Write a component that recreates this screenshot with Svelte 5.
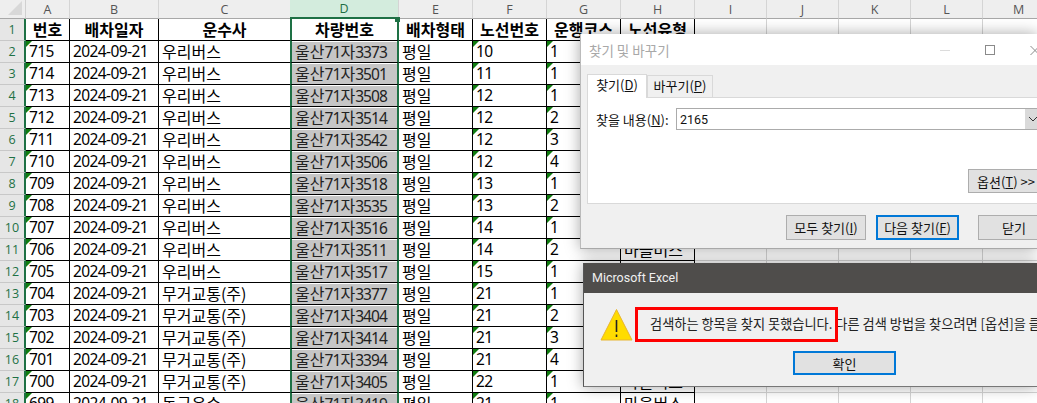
<script>
    const letters = ['A', 'B', 'C', 'D', 'E', 'F', 'G', 'H', 'I', 'J', 'K', 'L', 'M'];
    const widths = [44, 89, 132, 108, 74, 74, 74, 74, 72, 72, 72, 72, 72];
    const heads = ['번호', '배차일자', '운수사', '차량번호', '배차형태', '노선번호', '운행코스', '노선유형'];

    // no, company, plate, route, course
    const rows = [
        [715, '우리버스', 3373, 10, 1],
        [714, '우리버스', 3501, 11, 1],
        [713, '우리버스', 3508, 12, 1],
        [712, '우리버스', 3514, 12, 2],
        [711, '우리버스', 3542, 12, 3],
        [710, '우리버스', 3506, 12, 4],
        [709, '우리버스', 3518, 13, 1],
        [708, '우리버스', 3535, 13, 2],
        [707, '우리버스', 3516, 14, 1],
        [706, '우리버스', 3511, 14, 2],
        [705, '우리버스', 3517, 15, 1],
        [704, '무거교통(주)', 3377, 21, 1],
        [703, '무거교통(주)', 3404, 21, 2],
        [702, '무거교통(주)', 3414, 21, 3],
        [701, '무거교통(주)', 3394, 21, 4],
        [700, '무거교통(주)', 3405, 22, 1],
        [699, '동구운수', 3419, 21, 1]
    ];

    const gridCols = '26px ' + widths.map((w) => w + 'px').join(' ');
</script>

<div class="sheet" style="grid-template-columns: {gridCols}">
    <div class="corner"><span class="tri"></span></div>
    {#each letters as l}
        <div class="colhead" class:sel={l === 'D'}>{l}</div>
    {/each}

    <div class="rowhead">1</div>
    {#each heads as h, i}
        <div class="cell head" class:plate={i === 3}>{h}</div>
    {/each}
    {#each Array(5) as _}
        <div class="cell blank"></div>
    {/each}

    {#each rows as r, i}
        <div class="rowhead">{i + 2}</div>
        <div class="cell tick num">{r[0]}</div>
        <div class="cell num">2024-09-21</div>
        <div class="cell">{r[1]}</div>
        <div class="cell plate found">
            <span class="fill">울산<span class="num">71</span>자<span class="num">{r[2]}</span></span>
        </div>
        <div class="cell">평일</div>
        <div class="cell tick num">{r[3]}</div>
        <div class="cell tick num">{r[4]}</div>
        <div class="cell">마을버스</div>
        {#each Array(5) as _}
            <div class="cell blank"></div>
        {/each}
    {/each}
</div>

<div class="findbox">
    <div class="titlebar">
        <span>찾기 및 바꾸기</span>
        <svg class="winbtns" width="97" height="14" viewBox="0 0 97 14">
            <path d="M0 7.5h10" stroke="#dcdcdc" fill="none" />
            <rect x="45.5" y="2.5" width="9" height="9" stroke="#8a8a8a" fill="none" />
            <path d="M90.5 3l9 9M99.5 3l-9 9" stroke="#8a8a8a" fill="none" />
        </svg>
    </div>
    <div class="findbody">
        <div class="tabs">
            <div class="tab on">찾기(<u>D</u>)</div>
            <div class="tab">바꾸기(<u>P</u>)</div>
        </div>
        <div class="panel">
            <div class="findrow">
                <span class="findlabel">찾을 내용(<u>N</u>):</span>
                <div class="findinput">
                    <span>2165</span>
                    <span class="combo">
                        <svg width="10" height="6" viewBox="0 0 10 6">
                            <path d="M1 1l4 4 4-4" stroke="#333" fill="none" />
                        </svg>
                    </span>
                </div>
            </div>
            <div class="optrow">
                <button class="btn opt">옵션(<u>T</u>) &gt;&gt;</button>
            </div>
        </div>
        <div class="actions">
            <button class="btn all">모두 찾기(<u>I</u>)</button>
            <button class="btn next">다음 찾기(<u>F</u>)</button>
            <button class="btn close">닫기</button>
        </div>
    </div>
</div>

<div class="alertbox">
    <div class="alerttitle">Microsoft Excel</div>
    <div class="alertbody">
        <div class="msgrow">
            <svg class="warn" width="33" height="33" viewBox="0 0 33 33">
                <path d="M16.5 1.5L32 32H1z" fill="#ffdc00" stroke="#e8b530" stroke-linejoin="round" />
                <path d="M16.5 12v12" stroke="#222" stroke-width="1.6" />
                <path d="M16.5 26.5v2.5" stroke="#222" stroke-width="1.6" />
            </svg>
            <span class="msg">검색하는 항목을 찾지 못했습니다. 다른 검색 방법을 찾으려면 [옵션]을 클릭하십시오.</span>
            <div class="redbox"></div>
        </div>
        <div class="okrow">
            <button class="btn ok">확인</button>
        </div>
    </div>
</div>

<style>
    :global(body) {
        margin: 0;
        overflow: hidden;
        background: #fff;
    }

    .sheet {
        display: grid;
        grid-auto-rows: 22px;
        grid-template-rows: 19px;
        width: 1037px;
        height: 403px;
        overflow: hidden;
        font-family: "Noto Sans CJK KR", sans-serif;
        color: #000;
    }

    .corner {
        background: #eeeeee;
        border-right: 1px solid #d0d0d0;
        border-bottom: 1px solid #a8a8a8;
        box-sizing: border-box;
        position: relative;
    }

    .tri {
        position: absolute;
        right: 3px;
        bottom: 3px;
        border-style: solid;
        border-width: 0 0 14px 14px;
        border-color: transparent transparent #d8d8d8 transparent;
    }

    .colhead {
        background: #eeeeee;
        border-right: 1px solid #d4d4d4;
        border-bottom: 1px solid #a8a8a8;
        box-sizing: border-box;
        display: flex;
        align-items: center;
        justify-content: center;
        font: 12.5px "Open Sans", sans-serif;
        color: #555;
    }

    .colhead.sel {
        background: #d3ecdd;
        color: #1e6e42;
        border-bottom: 2px solid #1e7145;
        position: relative;
        z-index: 2;
        margin-left: -1px;
    }

    /* fill handle of the selection */
    .colhead.sel::after {
        content: "";
        position: absolute;
        right: -2px;
        bottom: -5px;
        width: 5px;
        height: 5px;
        background: #1e7145;
    }

    .rowhead {
        background: #e6e6e6;
        border-right: 2px solid #1e7145;
        border-bottom: 1px solid #c8c8c8;
        box-sizing: border-box;
        display: flex;
        align-items: center;
        justify-content: center;
        font: 12.5px "Open Sans", sans-serif;
        color: #1e7145;
    }

    .cell {
        border-right: 1px solid #000;
        border-bottom: 1px solid #000;
        box-sizing: border-box;
        font-size: 16px;
        line-height: 20px;
        padding-left: 3px;
        white-space: nowrap;
        position: relative;
    }

    .cell.num, .num {
        font-family: "Noto Sans", "Noto Sans CJK KR", sans-serif;
        font-size: 15.5px;
        letter-spacing: -0.6px;
    }

    .fill .num {
        letter-spacing: -0.9px;
    }

    .cell.head {
        font-weight: 700;
        text-align: center;
        padding-left: 0;
    }

    .cell.blank {
        border: 0;
        border-right: 1px solid #d4d4d4;
        border-bottom: 1px solid #d4d4d4;
    }

    .tick::before {
        content: "";
        position: absolute;
        left: 0;
        top: 0;
        border-style: solid;
        border-width: 6px 6px 0 0;
        border-color: #107c10 transparent transparent transparent;
    }

    .plate {
        border-left: 2px solid #1e7145;
        border-right: 2px solid #1e7145;
        margin-left: -1px;
    }

    .found {
        padding-left: 0;
    }

    .fill {
        display: block;
        background: #c6c6c6;
        height: 20px;
        margin-top: 1px;
        padding-left: 3px;
        line-height: 19px;
        color: #222;
    }

    .findbox {
        position: absolute;
        left: 580px;
        top: 34px;
        width: 457px;
        height: 215px;
        overflow: hidden;
        box-sizing: border-box;
        background: #f0f0f0;
        box-shadow: 0 0 14px rgba(0, 0, 0, 0.35);
        border-left: 1px solid #bbb;
        border-bottom: 1px solid #aaa;
        font: 13px "Noto Sans CJK KR", sans-serif;
        color: #111;
    }

    .titlebar {
        height: 31px;
        background: #fff;
        display: flex;
        align-items: center;
        justify-content: space-between;
        padding: 0 0 0 8px;
        color: #a8a8a8;
        font-size: 13.5px;
    }

    .winbtns {
        flex: none;
    }

    .findbody {
        padding: 8px 0 0 6px;
    }

    .tabs {
        display: flex;
        align-items: flex-end;
        height: 24px;
    }

    .tab {
        width: 66px;
        height: 22px;
        box-sizing: border-box;
        border: 1px solid #d9d9d9;
        border-bottom: 0;
        line-height: 20px;
        white-space: nowrap;
        text-align: center;
    }

    .tab.on {
        width: 60px;
        height: 24px;
        background: #fff;
        margin-bottom: -1px;
        position: relative;
        z-index: 1;
    }

    .panel {
        width: 480px;
        height: 107px;
        box-sizing: border-box;
        background: #fff;
        border: 1px solid #d9d9d9;
        padding: 10px 0 0 8px;
    }

    .findrow {
        display: flex;
        align-items: center;
        gap: 8px;
    }

    .findlabel {
        width: 72px;
        white-space: nowrap;
    }

    .findinput {
        flex: none;
        width: 367px;
        height: 22px;
        box-sizing: border-box;
        border: 1px solid #ababab;
        display: flex;
        justify-content: space-between;
        align-items: center;
        padding-left: 3px;
        font-family: Roboto, sans-serif;
        font-size: 12.5px;
    }

    .combo {
        width: 17px;
        height: 20px;
        padding-left: 3px;
        box-sizing: border-box;
        background: #dadada;
        display: flex;
        align-items: center;
    }

    .optrow {
        margin: 39px 0 0 372px;
    }

    .btn {
        font: 13px "Noto Sans CJK KR", sans-serif;
        color: #111;
        background: #e1e1e1;
        border: 1px solid #adadad;
        box-sizing: border-box;
        padding: 0;
        white-space: nowrap;
    }

    .opt {
        width: 90px;
        height: 24px;
        text-align: left;
        padding-left: 8px;
    }

    .actions {
        display: flex;
        margin-top: 11px;
        margin-left: 199px;
    }

    .actions .btn {
        flex: none;
    }

    .all {
        width: 80px;
        height: 25px;
    }

    .next {
        width: 83px;
        height: 25px;
        margin-left: 10px;
        border: 2px solid #0078d7;
    }

    .close {
        width: 72px;
        height: 25px;
        margin-left: 19px;
    }

    .alertbox {
        position: absolute;
        left: 583px;
        top: 263px;
        width: 454px;
        height: 124px;
        overflow: hidden;
        box-sizing: border-box;
        background: #f0f0f0;
        border-left: 1px solid #555;
        border-bottom: 1px solid #777;
        box-shadow: 0 0 14px rgba(0, 0, 0, 0.35);
    }

    .alerttitle {
        height: 30px;
        background: #4f4d4b;
        color: #f0f0f0;
        font: 12.5px/30px Roboto, sans-serif;
        padding-left: 8px;
    }

    .alertbody {
        font: 13.2px "Noto Sans CJK KR", sans-serif;
        color: #222;
    }

    .msgrow {
        position: relative;
        height: 58px;
        display: flex;
        align-items: flex-start;
        white-space: nowrap;
        padding: 15px 0 0 16px;
        box-sizing: border-box;
    }

    .warn {
        flex: none;
    }

    .msg {
        margin-left: 17px;
        margin-top: 6px;
    }

    .redbox {
        position: absolute;
        left: 51px;
        top: 14px;
        width: 203px;
        height: 35px;
        box-sizing: border-box;
        border: 3px solid #fe0000;
    }

    .okrow {
        padding-left: 209px;
    }

    .ok {
        width: 103px;
        height: 24px;
        border: 2px solid #0078d7;
    }
</style>
